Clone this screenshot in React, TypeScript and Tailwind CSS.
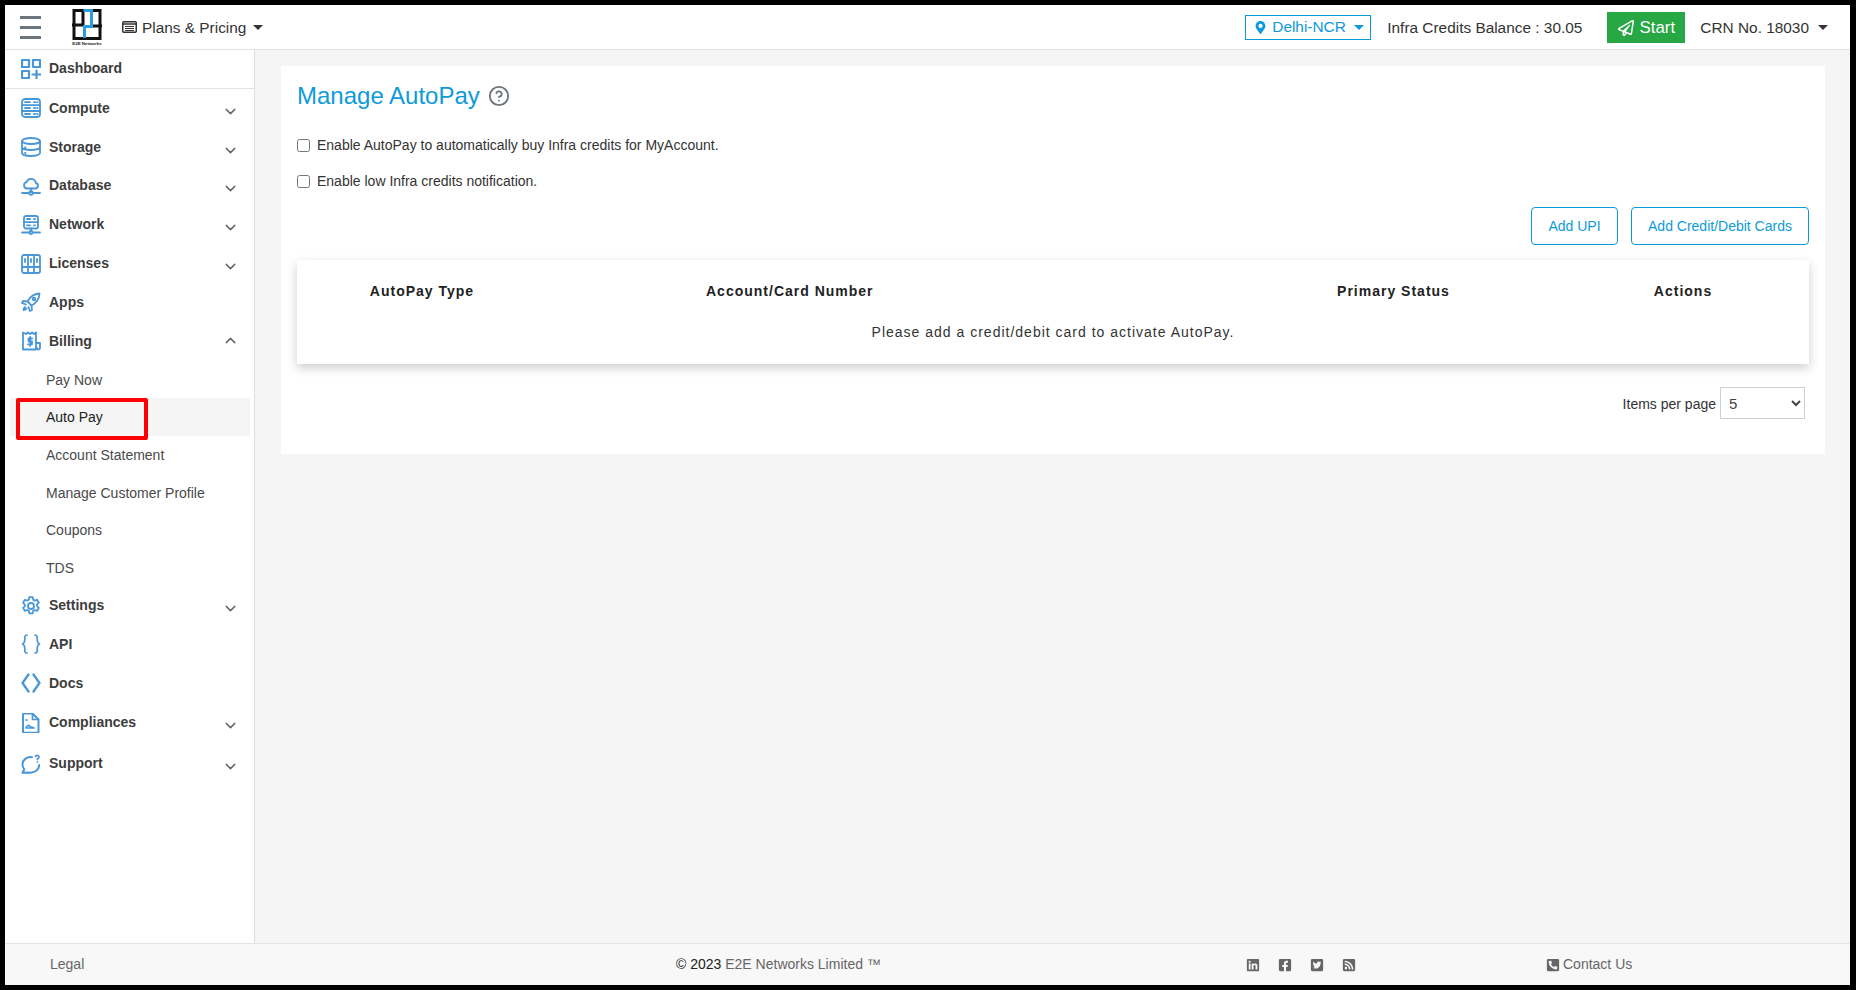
import React from "react";
import { ChevronDown, ChevronUp, CircleHelp } from "lucide-react";
import { FaMapMarkerAlt, FaRegPaperPlane, FaLinkedin, FaFacebookSquare, FaTwitterSquare, FaRssSquare, FaPhoneSquareAlt } from "react-icons/fa";

const S = ({ children }: { children: React.ReactNode }) => (
  <svg viewBox="0 0 20 20" width="20" height="20" fill="none" stroke="#4a97d8" strokeWidth="1.8" strokeLinecap="round" strokeLinejoin="round" className="shrink-0">
    {children}
  </svg>
);

const icons: Record<string, React.ReactNode> = {
  Dashboard: (
    <S>
      <rect x="1" y="1" width="7" height="7" strokeWidth="2.200" strokeLinecap="butt" />
      <rect x="12" y="1" width="7" height="7" strokeWidth="2.200" />
      <rect x="1" y="12" width="7" height="7" strokeWidth="2.200" />
      <path d="M15.500 11.500v8M11.500 15.500h8" strokeWidth="2.200" />
    </S>
  ),
  Compute: (
    <S>
      <rect x="1" y="1" width="18" height="18" rx="3" />
      <path d="M1 7.200h18M1 13h18M4 4.200h5M4 10h5M4 16h5M13 4.200h1M16 4.200h.5M13 10h1M16 10h.5M13 16h1M16 16h.5" />
    </S>
  ),
  Storage: (
    <S>
      <ellipse cx="10" cy="4" rx="9" ry="3" />
      <path d="M1 4v12c0 1.700 4 3 9 3s9-1.300 9-3V4M1 10c0 1.700 4 3 9 3s9-1.300 9-3M4 10.500h.5M4 16h.5" />
    </S>
  ),
  Database: (
    <S>
      <path d="M6 12.500a3.200 3.200 0 0 1-.5-6.300A4.800 4.800 0 0 1 14.800 7a2.800 2.800 0 0 1-.3 5.500z" />
      <path d="M10 12.500v4M1 17h7M12 17h7" />
      <circle cx="10" cy="17" r="1.800" />
    </S>
  ),
  Network: (
    <S>
      <rect x="3" y="1" width="14" height="12.500" rx="2" />
      <path d="M3 7.200h14M6 4h3M13 4h1M6 10.300h3M13 10.300h1M10 13.500v3M1 17.500h7M12 17.500h7" />
      <circle cx="10" cy="17.500" r="1.500" />
    </S>
  ),
  Licenses: (
    <S>
      <rect x="1" y="1" width="18" height="18" rx="2" />
      <path d="M7 1v18M13 1v18M1 13h18M4 5v3M10 5v3M16 5v3" />
    </S>
  ),
  Apps: (
    <S>
      <path d="M6.500 9.500C9 4.500 13.500 1.800 18.500 1.500c-.3 5-3 9.500-8 12z" />
      <path d="M6.500 9.500 2 9 1 11l3.800 1.500M10.500 13.500l.5 4.500-2 1-1.500-3.800M4 15c-1 .8-1.500 2-1.500 3 1 0 2-.5 3-1.500" />
      <circle cx="13" cy="7" r="1.300" />
    </S>
  ),
  Billing: (
    <S>
      <path d="M2 1.500v17h13V1.500l-2 1.500-2-1.500-2 1.500-2-1.500-2 1.500z" />
      <path d="M15 12h4v5a1.500 1.500 0 0 1-3 0M11 7.500H7.500v2.800H11v3H7M9.200 6v9" />
    </S>
  ),
  Settings: (
    <S>
      <path d="M8.300 1.200h3.400l.5 2.500 1.600.9 2.400-.8 1.700 2.900-1.900 1.700v1.800l1.900 1.700-1.700 2.900-2.400-.8-1.600.9-.5 2.500H8.300l-.5-2.500-1.600-.9-2.400.8-1.700-2.900 1.900-1.700V9.100L2.100 6.700l1.700-2.900 2.400.8 1.600-.9z" />
      <circle cx="10" cy="10" r="3" />
    </S>
  ),
  API: (
    <S>
      <path d="M6 1C3.500 1 3.800 3 3.800 5.500S3.800 9 1.500 10c2.300 1 2.300 2 2.300 4.500S3.500 19 6 19M14 1c2.500 0 2.200 2 2.200 4.500s0 3.500 2.300 4.500c-2.300 1-2.300 2-2.300 4.500s.3 4.500-2.200 4.500" strokeWidth="1.700" />
    </S>
  ),
  Docs: (
    <S>
      <path d="M7.500 1.500 1.500 10l6 8.500M12.500 1.500l6 8.500-6 8.500" strokeWidth="2.300" />
    </S>
  ),
  Compliances: (
    <S>
      <path d="M3 .5h8.500l6 6V19a.800.800 0 0 1-1 .8H3a1 1 0 0 1-1-1V1.500a1 1 0 0 1 1-1z" strokeWidth="2" />
      <path d="M11.500.5v6h6M5 7h1M5 15c1-2 2-3 3-2.500s1 1.500 2 1.500 1.500 0 3 1z" strokeWidth="1.700" />
    </S>
  ),
  Support: (
    <S>
      <path d="M11 3.200C5.500 2.600 1.500 5.800 1.500 10.500c0 2 .8 3.700 1.800 4.800L1.500 18.800l6-.3c5.500.8 10.500-2.200 10.700-7.500" strokeWidth="2" />
      <path d="M14.500 2.500c.5-1.500 3.500-1.500 3.500.5 0 1.300-1.500 1.300-1.700 2.500M16.300 8h.1" strokeWidth="1.700" />
    </S>
  ),
};

const Caret = ({ className = "" }: { className?: string }) => (
  <span className={`inline-block h-0 w-0 border-x-[5px] border-t-[5px] border-x-transparent ${className}`} />
);

const Row = ({ label, chevron, h = "h-[38.8px]" }: { label: string; chevron?: "up" | "down"; h?: string }) => (
  <div className={`flex items-center pl-[16px] pr-[14px] ${h}`}>
    <span className="w-[20px]">{icons[label]}</span>
    <span className="ml-[8px] flex-1 text-[14px] font-bold text-[#3d3d3d]">{label}</span>
    {chevron === "down" && <ChevronDown size={17} strokeWidth={2} className="text-[#666666] mr-[1px] mt-[6px]" />}
    {chevron === "up" && <ChevronUp size={17} strokeWidth={2} className="text-[#666666] mr-[1px] -mt-[1px]" />}
  </div>
);

const Sub = ({ label, active }: { label: string; active?: boolean }) => (
  <div className={`ml-[5px] mr-[4px] flex h-[37.6px] items-center pt-[2px] pl-[36px] text-[14px] ${active ? "bg-[#f5f5f5] text-[#222222]" : "text-[#4a4a4a]"}`}>
    {label}
  </div>
);

const Logo = () => (
  <svg viewBox="0 0 30 37" width="30" height="37">
    <rect x="2" y="1.500" width="26" height="28" fill="#fff" stroke="#111" strokeWidth="3" />
    <path d="M11 0v17M0 16h11M19 17h11" stroke="#111" strokeWidth="3" />
    <path d="M11.500 1.500h8V17.500H12.500V29" fill="none" stroke="#2a9ddc" strokeWidth="3" />
    <text x="15" y="36" textAnchor="middle" fontSize="4.400" fontWeight="700" fill="#222" fontFamily="'Liberation Sans', sans-serif">E2E Networks</text>
  </svg>
);

const PlansIcon = () => (
  <svg viewBox="0 0 15 12" width="15" height="12" fill="none" stroke="#333333">
    <rect x=".75" y=".75" width="13.500" height="10.500" rx="1" strokeWidth="1.500" />
    <path d="M1 3h13" strokeWidth="1.500" />
    <path d="M3 5.500h9M3 7.500h9M3 9.500h9" strokeWidth="1" />
  </svg>
);

export default function App() {
  return (
    <div className="relative flex h-[990px] w-[1856px] flex-col overflow-hidden border-t-[5px] border-r-[6px] border-b-[5px] border-l-[5px] border-black bg-[#f5f5f5] font-['Liberation_Sans',Arial,sans-serif] text-[14px]">
      <header className="flex h-[45px] shrink-0 items-center border-b border-[#e2e2e2] bg-white">
        <div className="ml-[15px] flex w-[21px] flex-col gap-[7px]">
          <span className="h-[3px] bg-[#6c757d]" />
          <span className="h-[3px] bg-[#6c757d]" />
          <span className="h-[3px] bg-[#6c757d]" />
        </div>
        <div className="ml-[31px]"><Logo /></div>
        <div className="ml-[20px] flex items-center pt-[1px] text-[15.4px] text-[#333333]">
          <PlansIcon />
          <span className="ml-[5px]">Plans &amp; Pricing</span>
          <Caret className="ml-[7px] border-t-[#333333]" />
        </div>
        <div className="ml-auto flex h-[25px] w-[126px] items-center border border-[#0d9ad9] pl-[8px] text-[15.4px] text-[#0d9ad9]">
          <FaMapMarkerAlt size={13} />
          <span className="ml-[5px]">Delhi-NCR</span>
          <Caret className="ml-[8px] border-t-[#0d9ad9]" />
        </div>
        <span className="ml-[16px] pt-[1px] text-[15.4px] text-[#333333]">Infra Credits Balance : 30.05</span>
        <div className="ml-[25px] flex h-[31px] w-[78px] items-center justify-center gap-[6px] bg-[#28a745] pt-[1px] text-[16.8px] text-white">
          <FaRegPaperPlane size={16} />
          <span>Start</span>
        </div>
        <span className="ml-[15px] pt-[1px] text-[15.4px] text-[#333333]">CRN No. 18030</span>
        <Caret className="ml-[9px] mr-[22px] border-t-[#333333]" />
      </header>

      <div className="flex min-h-0 flex-1">
        <aside className="w-[250px] shrink-0 border-r border-[#dedede] bg-white">
          <div className="flex h-[39px] items-center border-b border-[#e2e2e2] pl-[16px]">
            {icons.Dashboard}
            <span className="ml-[8px] -mt-[2px] text-[14px] font-bold text-[#3d3d3d]">Dashboard</span>
          </div>
          <Row label="Compute" chevron="down" />
          <Row label="Storage" chevron="down" />
          <Row label="Database" chevron="down" />
          <Row label="Network" chevron="down" />
          <Row label="Licenses" chevron="down" />
          <Row label="Apps" />
          <Row label="Billing" chevron="up" />
          <Sub label="Pay Now" />
          <Sub label="Auto Pay" active />
          <Sub label="Account Statement" />
          <Sub label="Manage Customer Profile" />
          <Sub label="Coupons" />
          <Sub label="TDS" />
          <Row label="Settings" chevron="down" />
          <Row label="API" />
          <Row label="Docs" />
          <Row label="Compliances" chevron="down" h="h-[40px]" />
          <Row label="Support" chevron="down" h="h-[42px]" />
        </aside>

        <main className="min-w-0 flex-1 pt-[16px] pr-[25px] pl-[26px]">
          <section className="h-[388px] bg-white px-[16px]">
            <div className="flex h-[60px] items-center">
              <h1 className="text-[24px] leading-none text-[#0d9ad9]">Manage AutoPay</h1>
              <CircleHelp size={22} strokeWidth={2} className="ml-[8px] text-[#6c757d]" />
            </div>
            <label className="mt-[9px] flex h-[20px] items-center text-[14px] text-[#333333]">
              <input type="checkbox" className="m-0 h-[13px] w-[13px]" />
              <span className="ml-[7px]">Enable AutoPay to automatically buy Infra credits for MyAccount.</span>
            </label>
            <label className="mt-[16px] flex h-[20px] items-center text-[14px] text-[#333333]">
              <input type="checkbox" className="m-0 h-[13px] w-[13px]" />
              <span className="ml-[7px]">Enable low Infra credits notification.</span>
            </label>
            <div className="mt-[16px] flex justify-end gap-[13px]">
              <button className="h-[38px] w-[87px] rounded-[4px] border border-[#0d9ad9] text-[14px] text-[#0d9ad9]">Add UPI</button>
              <button className="h-[38px] w-[178px] rounded-[4px] border border-[#0d9ad9] text-[14px] text-[#0d9ad9]">Add Credit/Debit Cards</button>
            </div>
            <div className="mt-[15px] h-[104px] bg-white pt-[21px] tracking-[1px] text-[#222222] shadow-[0_4px_10px_rgba(0,0,0,0.2)]">
              <div className="grid grid-cols-[250px_681px_331px_248px] text-[14px] font-bold">
                <span className="text-center">AutoPay Type</span>
                <span className="pl-[159px]">Account/Card Number</span>
                <span className="text-center">Primary Status</span>
                <span className="text-center">Actions</span>
              </div>
              <p className="mt-[20px] text-center text-[14px] text-[#333333]">Please add a credit/debit card to activate AutoPay.</p>
            </div>
            <div className="mt-[23px] flex items-center justify-end pr-[4px]">
              <span className="mt-[2px] text-[14px] text-[#333333]">Items per page</span>
              <select className="ml-[4px] h-[32px] w-[85px] border border-[#ccd1d9] bg-white pl-[4px] text-[15px] text-[#444444]">
                <option>5</option>
              </select>
            </div>
          </section>
        </main>
      </div>

      <footer className="grid h-[42px] shrink-0 grid-cols-[671px_570px_300px_1fr] items-center border-t border-[#e4e4e4] bg-[#f8f8f8] text-[14px] text-[#666666]">
        <span className="pl-[45px]">Legal</span>
        <span><span className="text-[#222222]">© 2023 </span>E2E Networks Limited ™</span>
        <div className="flex gap-[18px] text-[#666666]">
          <FaLinkedin size={14} />
          <FaFacebookSquare size={14} />
          <FaTwitterSquare size={14} />
          <FaRssSquare size={14} />
        </div>
        <div className="flex items-center gap-[3px]"><FaPhoneSquareAlt size={14} /><span>Contact Us</span></div>
      </footer>

      <div className="absolute top-[393px] left-[11px] h-[42px] w-[132px] rounded-[2px] border-[4px] border-[#ff0000]" />
    </div>
  );
}
